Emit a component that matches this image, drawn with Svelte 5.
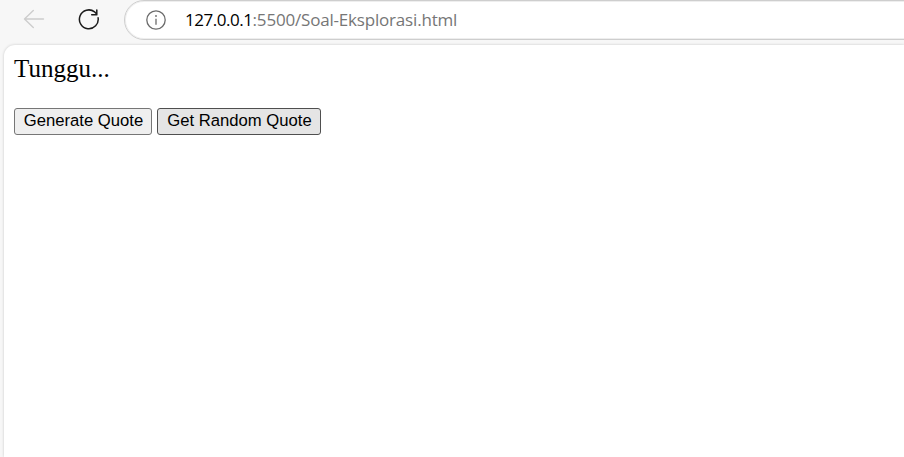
<script>
  let message = $state('Tunggu...');
  const host = '127.0.0.1';
  const path = ':5500/Soal-Eksplorasi.html';
</script>

<div class="browser">
  <header class="toolbar">
    <svg class="back" width="22" height="20" viewBox="0 0 22 20" fill="none" stroke="#cdcdcd" stroke-width="1.4" stroke-linecap="round" stroke-linejoin="round" aria-label="Back">
      <path d="M20.5 10H1.5M10.3 1.5L1.5 10L10.3 18.5" />
    </svg>
    <svg class="reload" width="22" height="22" viewBox="0 0 22 22" fill="none" stroke="#1b1b1b" stroke-width="1.5" stroke-linecap="round" stroke-linejoin="round" aria-label="Reload">
      <path d="M20.1 9.8A9.4 9.4 0 1 1 16.6 3.9C17.5 4.6 18.2 5.5 18.8 6.8M18.8 1.9V6.8H13.7" />
    </svg>
    <div class="address">
      <svg class="info" width="20" height="20" viewBox="0 0 20 20" fill="none" stroke="#6b6b6b" stroke-width="1.3" aria-label="Site information">
        <circle cx="10" cy="10" r="9.2" />
        <path d="M10 8.7V14.7" />
        <circle cx="10" cy="6" r="0.9" fill="#6b6b6b" stroke="none" />
      </svg>
      <span class="url"><span class="host">{host}</span><span class="path">{path}</span></span>
    </div>
  </header>
  <main class="page">
    <p>{message}</p>
    <div class="actions">
      <button class="generate">Generate Quote</button>
      <button class="random">Get Random Quote</button>
    </div>
  </main>
</div>

<style>
  :global(body) {
    margin: 0;
    overflow: hidden;
  }
  .browser {
    box-sizing: border-box;
    display: flex;
    flex-direction: column;
    width: 100vw;
    height: 100vh;
    padding-left: 4px;
    overflow: hidden;
    background: #f7f7f7;
  }
  .toolbar {
    display: flex;
    align-items: flex-start;
    height: 45px;
    flex: none;
  }
  svg {
    display: block;
    flex: none;
  }
  .back {
    margin: 9px 0 0 19px;
  }
  .reload {
    margin: 8px 0 0 33px;
  }
  .address {
    box-sizing: border-box;
    display: flex;
    align-items: center;
    flex: 1;
    height: 40px;
    margin-left: 24px;
    margin-right: -30px;
    padding-left: 21px;
    border: 1px solid #cecece;
    border-radius: 20px;
    background: #fff;
    box-shadow: inset 0 0 0 1px #eeeeee;
  }
  .url {
    margin: -1px 0 0 19px;
    font: 17px/24px "Open Sans", "Noto Sans", sans-serif;
    white-space: nowrap;
  }
  .host {
    color: #000;
    letter-spacing: -0.46px;
  }
  .path {
    color: #767676;
    letter-spacing: -0.19px;
  }
  .page {
    box-sizing: border-box;
    flex: 1;
    padding: 9px 10px;
    border-radius: 11px 0 0 0;
    background: #fff;
    box-shadow: 0 0 3px #00000030;
  }
  p {
    margin: 0 0 25px;
    font: 25px/29px "Liberation Serif", "Times New Roman", serif;
    color: #000;
  }
  .actions {
    display: flex;
    gap: 5px;
  }
  button {
    box-sizing: border-box;
    height: 27px;
    margin: 0;
    padding: 0 0 2px 1px;
    border: 1px solid #767676;
    border-radius: 3px;
    background: #efefef;
    color: #000;
    font: 16.67px/22px "Liberation Sans", Arial, sans-serif;
    white-space: nowrap;
  }
  .generate {
    width: 138px;
  }
  .random {
    width: 164px;
    border-color: #4f4f4f;
    background: #e5e5e5;
  }
</style>
